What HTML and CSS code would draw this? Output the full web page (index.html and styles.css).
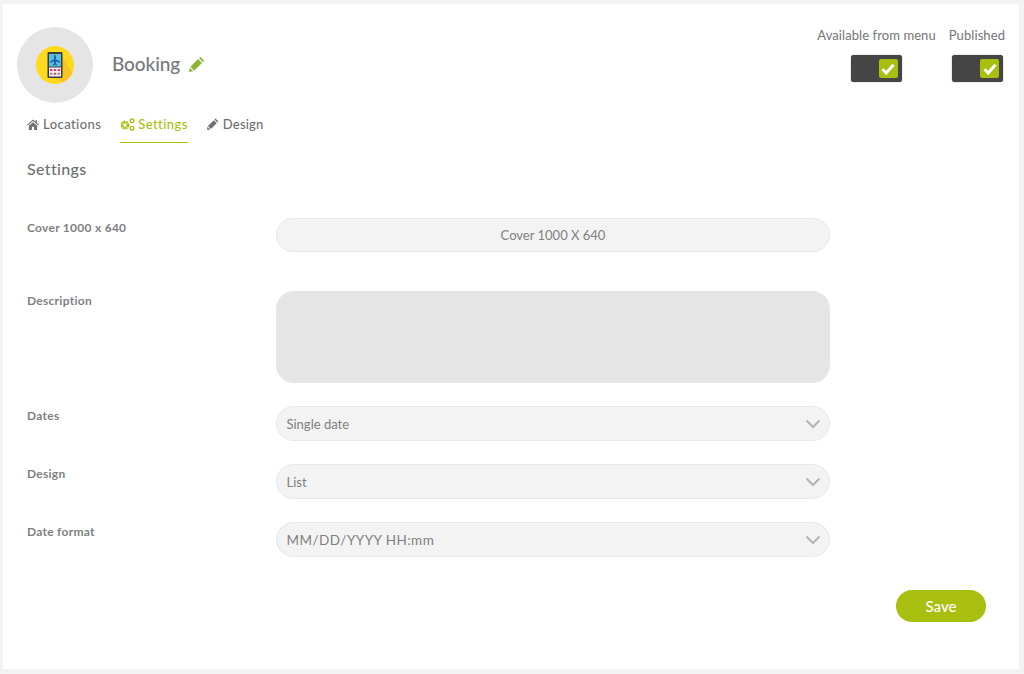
FILE: index.html
```html
<!DOCTYPE html>
<html lang="en">
<head>
<meta charset="utf-8">
<title>Booking settings</title>
<link rel="stylesheet" href="styles.css">
</head>
<body>
<main class="card">
  <header class="head">
    <div class="avatar">
      <svg width="38" height="38" viewBox="0 0 38 38">
        <circle cx="19" cy="19" r="19" fill="#ffd91c"/>
        <path d="M25 8 L36.500 27 A19 19 0 0 1 27 36 L12 30Z" fill="#f9c421"/>
        <rect x="11.500" y="6" width="15" height="26" rx="1" fill="#3a3f3d"/>
        <rect x="13" y="8" width="12" height="12.500" fill="#55bfdc"/>
        <path d="M19 9c.7 0 1 .9 1 1.800v2.400l4 2.300v1.200l-4-1.200v2.200l1.200 1v.8l-2.200-.6-2.200.6v-.8l1.200-1v-2.200l-4 1.200v-1.200l4-2.300v-2.400c0-.9.300-1.800 1-1.800z" fill="#1f63b8"/>
        <rect x="13" y="21.500" width="12" height="9" fill="#f1f1f1"/>
        <rect x="14" y="23" width="2.400" height="2" fill="#e0357f"/>
        <rect x="17.800" y="23" width="2.400" height="2" fill="#e0357f"/>
        <rect x="21.600" y="23" width="2.400" height="2" fill="#e0357f"/>
        <rect x="14" y="26.800" width="2.400" height="2" fill="#8a8f94"/>
        <rect x="17.800" y="26.800" width="2.400" height="2" fill="#e0357f"/>
        <rect x="21.600" y="26.800" width="2.400" height="2" fill="#8a8f94"/>
      </svg>
    </div>
    <h1 class="title">Booking
      <svg class="title-edit" width="16" height="16" viewBox="0 0 16 16"><path d="M11.300.800 15.200 4.700 13.900 6 10 2.100ZM9.100 3 13 6.900 5.200 14.700 1.300 10.800ZM.7 11.700 4.300 15.300 0 16Z" fill="#8fb339"/></svg>
    </h1>
    <div class="toggles">
      <div class="toggle-group toggle-menu">
        <span class="toggle-label">Available from menu</span>
        <span class="toggle"><span class="knob"><svg width="14" height="12" viewBox="0 0 14 12"><path d="M1.500 6.300 5.200 10 12.500 1.800" fill="none" stroke="#fff" stroke-width="3"/></svg></span></span>
      </div>
      <div class="toggle-group toggle-pub">
        <span class="toggle-label">Published</span>
        <span class="toggle"><span class="knob"><svg width="14" height="12" viewBox="0 0 14 12"><path d="M1.500 6.300 5.200 10 12.500 1.800" fill="none" stroke="#fff" stroke-width="3"/></svg></span></span>
      </div>
    </div>
  </header>

  <nav class="tabs">
    <a class="tab">
      <svg width="12" height="11" viewBox="0 0 13 12"><path d="M6.500.5 0 6.200l.8.900L6.500 2.200l5.700 4.900.8-.9-2.300-2V1H9.300v1.900ZM2 7.300V12h3.300V8.500h2.400V12H11V7.300L6.500 3.500Z" fill="#6f6f6f"/></svg>
      Locations
    </a>
    <a class="tab tab-active">
      <svg width="15" height="13" viewBox="0 0 15 13"><circle cx="5" cy="7" r="3" fill="none" stroke="#a9bf10" stroke-width="2.800" stroke-dasharray="1.900 .5"/><circle cx="12" cy="2.800" r="1.800" fill="none" stroke="#a9bf10" stroke-width="1.400"/><circle cx="12" cy="10.200" r="1.800" fill="none" stroke="#a9bf10" stroke-width="1.400"/></svg>
      Settings
    </a>
    <a class="tab tab-design">
      <svg width="12" height="12" viewBox="0 0 16 16"><path d="M11.300.800 15.200 4.700 13.900 6 10 2.100ZM9.100 3 13 6.900 5.200 14.700 1.300 10.800ZM.7 11.700 4.300 15.300 0 16Z" fill="#6f6f6f"/></svg>
      Design
    </a>
  </nav>

  <h2 class="section">Settings</h2>

  <form class="form">
    <div class="row row-cover">
      <span class="label">Cover 1000 x 640</span>
      <div class="field field-center">Cover 1000 X 640</div>
    </div>
    <div class="row row-desc">
      <span class="label">Description</span>
      <div class="area"></div>
    </div>
    <div class="row row-select">
      <span class="label">Dates</span>
      <div class="field field-select">Single date
        <svg class="chev" width="16" height="10" viewBox="0 0 16 10"><path d="M1.500 1.500 8 8 14.500 1.500" fill="none" stroke="#b4b4b4" stroke-width="2"/></svg>
      </div>
    </div>
    <div class="row row-select">
      <span class="label">Design</span>
      <div class="field field-select">List
        <svg class="chev" width="16" height="10" viewBox="0 0 16 10"><path d="M1.500 1.500 8 8 14.500 1.500" fill="none" stroke="#b4b4b4" stroke-width="2"/></svg>
      </div>
    </div>
    <div class="row row-select">
      <span class="label">Date format</span>
      <div class="field field-select field-wide">MM/DD/YYYY HH:mm
        <svg class="chev" width="16" height="10" viewBox="0 0 16 10"><path d="M1.500 1.500 8 8 14.500 1.500" fill="none" stroke="#b4b4b4" stroke-width="2"/></svg>
      </div>
    </div>
    <div class="actions"><button class="save" type="button">Save</button></div>
  </form>
</main>
</body>
</html>
```
FILE: styles.css
```css
* { box-sizing: border-box; }
html, body { height: 100%; }
body {
  margin: 0;
  padding: 4px 5px 5px 3px;
  background: #f3f3f3;
  font-family: "Lato", "Liberation Sans", sans-serif;
  color: #6f6f6f;
  overflow: hidden;
}
.card {
  height: 665px;
  background: #fff;
  padding: 23px 33px 0 14px;
}
.head {
  display: flex;
  align-items: flex-start;
}
.avatar {
  width: 76px;
  height: 76px;
  border-radius: 50%;
  background: #e5e5e5;
  display: flex;
  align-items: center;
  justify-content: center;
  flex: none;
}
.title {
  margin: 25px 0 0 19px;
  font-size: 19px;
  line-height: 24px;
  font-weight: 500;
  letter-spacing: -.1px;
  color: #77777b;
  display: flex;
  align-items: center;
  gap: 9px;
}
.toggles {
  margin-left: auto;
  margin-right: -19px;
  display: flex;
  gap: 13px;
}
.toggle-group {
  display: flex;
  flex-direction: column;
  align-items: flex-end;
}
.toggle-label {
  font-size: 13px;
  line-height: 16px;
  letter-spacing: .08px;
  color: #747474;
  margin-bottom: 12px;
}
.toggle-menu .toggle { margin-right: 34px; }
.toggle-pub .toggle { margin-right: 2px; }
.toggle {
  width: 51px;
  height: 27px;
  background: #454545;
  border-radius: 3px;
  box-shadow: 0 0 1px #333;
  display: flex;
  align-items: center;
  justify-content: flex-end;
  padding-right: 4px;
}
.knob {
  width: 19px;
  height: 19px;
  background: #a9bf10;
  border-radius: 2px;
  display: flex;
  align-items: center;
  justify-content: center;
}
.tabs {
  display: flex;
  gap: 19px;
  margin: 6px 0 0 10px;
}
.tab {
  display: flex;
  align-items: center;
  gap: 4px;
  height: 34px;
  padding-bottom: 4px;
  font-size: 13px;
  letter-spacing: .42px;
  font-weight: 500;
  color: #6f6f6f;
}
.tab-active {
  color: #a9bf10;
  border-bottom: 1px solid #a9bf10;
  padding-bottom: 3px;
  gap: 3px;
}
.tab-design { letter-spacing: .2px; }
.section {
  margin: 16px 0 0 10px;
  font-size: 16px;
  line-height: 20px;
  letter-spacing: .35px;
  font-weight: 500;
  color: #707070;
}
.form { margin: 39px 0 0 10px; }
.row {
  display: grid;
  grid-template-columns: 249px 554px;
  align-items: start;
}
.row-cover { height: 73px; }
.row-desc { height: 115px; }
.row-select { height: 58px; }
.label {
  font-size: 12px;
  font-weight: 700;
  line-height: 16px;
  letter-spacing: .27px;
  color: #7f7f83;
  margin-top: 2px;
}
.field {
  height: 34px;
  border-radius: 17px;
  background: #f3f3f3;
  border: 1px solid #e8e8e8;
  font-size: 13px;
  color: #808080;
  display: flex;
  align-items: center;
}
.field-center { justify-content: center; }
.field-select {
  height: 35px;
  border-radius: 18px;
  padding: 0 8px 0 9.500px;
  justify-content: space-between;
}
.field-wide { font-size: 13.500px; letter-spacing: .45px; }
.area {
  height: 92px;
  border-radius: 18px;
  background: #e5e5e5;
}
.actions {
  display: flex;
  justify-content: flex-end;
  margin-top: 10px;
}
.save {
  width: 90px;
  height: 32px;
  border: 0;
  border-radius: 16px;
  background: #a9bf10;
  color: #fff;
  font: 500 15px "Lato", "Liberation Sans", sans-serif;
}
```
